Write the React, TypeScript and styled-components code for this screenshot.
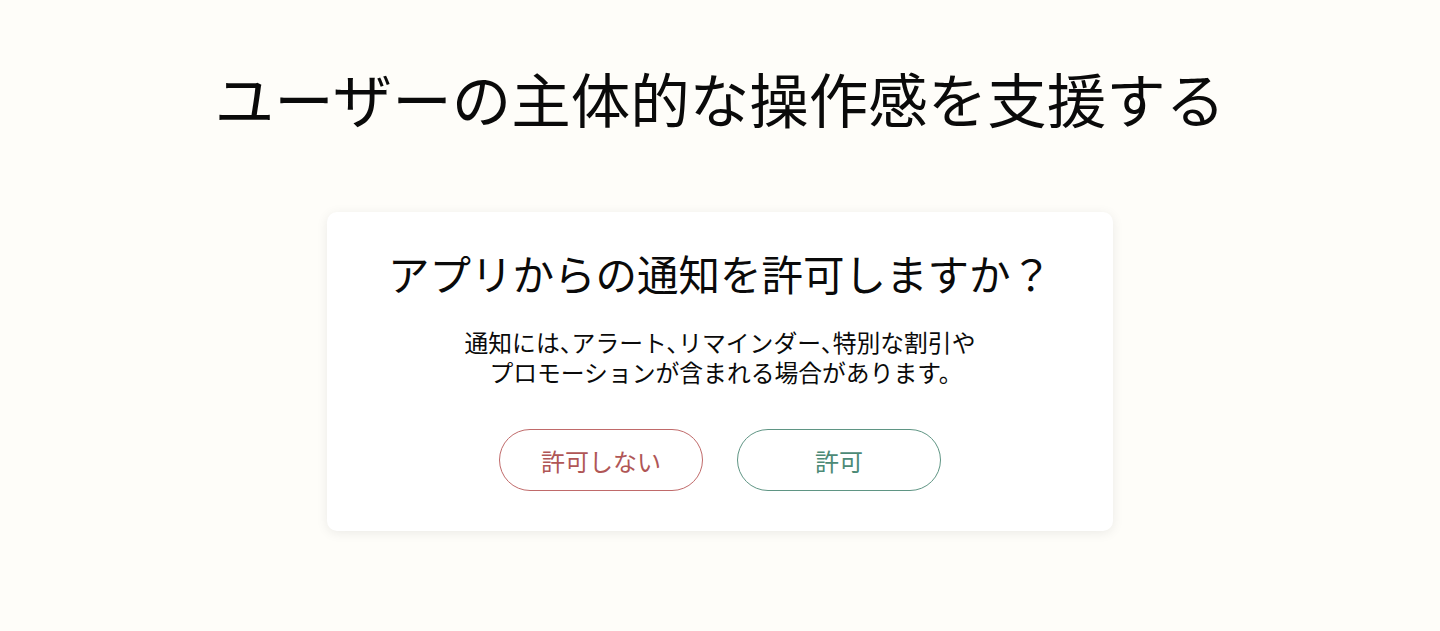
import React from "react";
import styled, { createGlobalStyle } from "styled-components";

const GlobalStyle = createGlobalStyle`
  body {
    margin: 0;
    background: #fefdf9;
    font-family: "Noto Sans CJK JP", "Noto Sans", sans-serif;
    color: #0a0a0a;
  }
`;

const Page = styled.main`
  min-height: 631px;
  display: flex;
  flex-direction: column;
  align-items: center;
  padding-top: 52px;
  box-sizing: border-box;
`;

const Heading = styled.h1`
  margin: 0;
  font-size: 59.5px;
  line-height: 90px;
  font-weight: 400;
`;

const Card = styled.section`
  margin-top: 70px;
  width: 786px;
  box-sizing: border-box;
  padding: 31px 0 40px;
  background: #fff;
  border-radius: 10px;
  box-shadow: 0 2px 12px rgba(0, 0, 0, 0.08);
  display: flex;
  flex-direction: column;
  align-items: center;
`;

const Title = styled.h2`
  margin: 0;
  font-size: 41.5px;
  line-height: 60px;
  font-weight: 400;
`;

const Body = styled.p`
  margin: 24px 0 0;
  font-size: 23.8px;
  line-height: 30px;
  text-align: center;
  font-feature-settings: "halt";
`;

const Actions = styled.div`
  margin-top: 42px;
  display: flex;
  gap: 34px;
`;

const Button = styled.button<{ $tone: "deny" | "allow" }>`
  width: 204px;
  height: 62px;
  border-radius: 31px;
  background: #fff;
  font-family: inherit;
  font-size: 24px;
  cursor: pointer;
  border: 1.5px solid ${(p) => (p.$tone === "deny" ? "#c06a6a" : "#5f9584")};
  color: ${(p) => (p.$tone === "deny" ? "#b05656" : "#4c8a76")};
`;

export default function App() {
  return (
    <>
      <GlobalStyle />
      <Page>
        <Heading>ユーザーの主体的な操作感を支援する</Heading>
        <Card>
          <Title>アプリからの通知を許可しますか？</Title>
          <Body>
            通知には、アラート、リマインダー、特別な割引や
            <br />
            プロモーションが含まれる場合があります。
          </Body>
          <Actions>
            <Button $tone="deny">許可しない</Button>
            <Button $tone="allow">許可</Button>
          </Actions>
        </Card>
      </Page>
    </>
  );
}
